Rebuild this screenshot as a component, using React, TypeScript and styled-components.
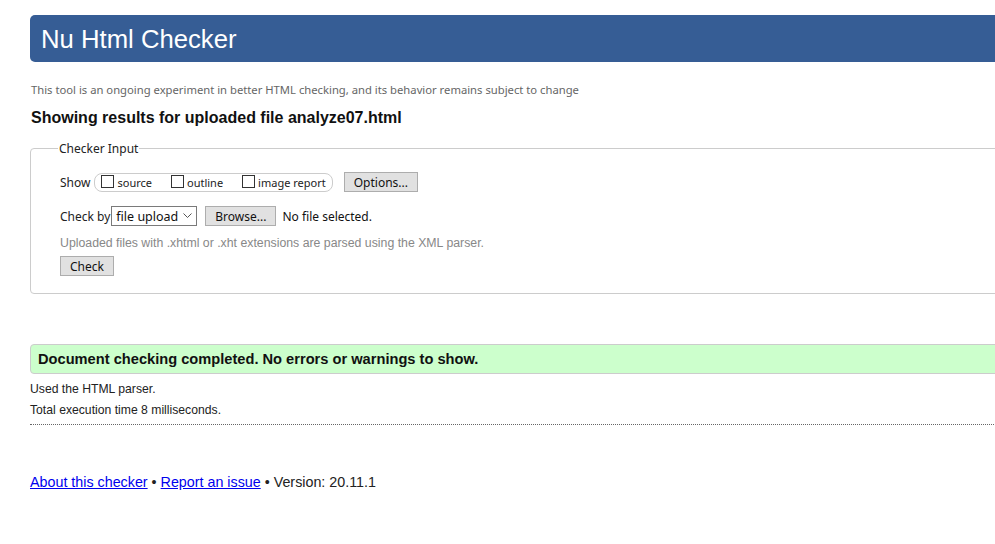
import React from "react";
import styled, { createGlobalStyle } from "styled-components";

const Global = createGlobalStyle`
  html, body { margin: 0; padding: 0; background: #fff; overflow: hidden; }
  body { font-family: "Liberation Sans", Arial, sans-serif; color: #222; }
`;

const UI = `"Noto Sans", "Open Sans", sans-serif`;

const Page = styled.div`
  width: 1040px;
  padding: 15px 0 0 30px;
  box-sizing: border-box;
`;

const Header = styled.h1`
  margin: 0;
  height: 47px;
  background: #365d95;
  border-radius: 5px;
  color: #fff;
  font-family: "Liberation Sans", Arial, sans-serif;
  font-weight: normal;
  font-size: 25.7px;
  line-height: 48px;
  padding-left: 11px;
`;

const Tagline = styled.p`
  margin: 20px 0 0 1px;
  font-family: ${UI};
  font-size: 11.25px;
  color: #666;
  line-height: 16px;
`;

const Title = styled.h2`
  margin: 10px 0 0 1px;
  font-size: 16px;
  font-weight: bold;
  line-height: 20px;
  color: #111;
`;

const Fieldset = styled.fieldset`
  margin: 12px 0 0 0;
  border: 1px solid #ccc;
  border-radius: 4px;
  padding: 15px 29px 17px 29px;
  font-family: ${UI};
  font-size: 12px;
  color: #222;
`;

const Legend = styled.legend`
  padding: 0 1px;
  margin-left: -2px;
  font-size: 12px;
  color: #222;
`;

const Row = styled.div<{ $mt?: number }>`
  display: flex;
  align-items: center;
  margin-top: ${(p) => p.$mt ?? 0}px;
  height: 20px;
`;

const Label = styled.span<{ $gap: number }>`
  font-size: 12px;
  margin-right: ${(p) => p.$gap}px;
`;

const Pill = styled.span`
  display: inline-flex;
  align-items: center;
  height: 17px;
  border: 1px solid #ccc;
  border-radius: 8px;
  padding: 0 6px 0 6px;
  margin-right: 11px;
`;

const Opt = styled.label<{ $gap?: number }>`
  display: inline-flex;
  align-items: center;
  font-size: 11px;
  margin-right: ${(p) => p.$gap ?? 0}px;
`;

const Box = styled.span`
  width: 11px;
  height: 11px;
  border: 1px solid #333;
  margin-right: 3px;
  display: inline-block;
  box-sizing: content-box;
  margin-top: -2px;
`;

const Button = styled.span`
  display: inline-flex;
  align-items: center;
  justify-content: center;
  height: 18px;
  padding: 0 9px;
  background: #e1e1e1;
  border: 1px solid #adadad;
  font-size: 12px;
  color: #111;
`;

const Select = styled.span`
  display: inline-flex;
  align-items: center;
  height: 18px;
  border: 1px solid #7a7a7a;
  padding: 0 4px 0 4px;
  font-size: 12.5px;
  margin-right: 8px;
  color: #111;
`;

const Chevron = styled.svg`
  margin-left: 5px;
`;

const Hint = styled.p`
  margin: 9px 0 0 0;
  font-family: "Liberation Sans", Arial, sans-serif;
  font-size: 12.3px;
  color: #888;
  line-height: 16px;
`;

const Note = styled.span`
  margin-left: 6px;
  font-size: 12px;
  color: #111;
`;

const Success = styled.div`
  margin-top: 50px;
  height: 28px;
  background: #ccffcc;
  border: 1px solid #ccc;
  border-radius: 4px;
  display: flex;
  align-items: center;
  padding-left: 7px;
  font-size: 14.65px;
  font-weight: bold;
  color: #111;
`;

const Info = styled.p<{ $mt?: number }>`
  margin: ${(p) => p.$mt ?? 0}px 0 0 0;
  font-size: 12.2px;
  line-height: 16px;
  color: #222;
`;

const Details = styled.div`
  margin-top: 7px;
  border-bottom: 1px dotted #666;
  padding-bottom: 6px;
`;

const Footer = styled.p`
  margin: 49px 0 0 0;
  font-size: 14.3px;
  color: #222;
  a { color: #00e; text-decoration: underline; }
`;

export default function App() {
  return (
    <>
      <Global />
      <Page>
        <Header>Nu Html Checker</Header>
        <Tagline>
          This tool is an ongoing experiment in better HTML checking, and its behavior remains subject to change
        </Tagline>
        <Title>Showing results for uploaded file analyze07.html</Title>
        <Fieldset>
          <Legend>Checker Input</Legend>
          <Row>
            <Label $gap={4}>Show</Label>
            <Pill>
              <Opt $gap={19}>
                <Box />
                source
              </Opt>
              <Opt $gap={19}>
                <Box />
                outline
              </Opt>
              <Opt>
                <Box />
                image report
              </Opt>
            </Pill>
            <Button>Options...</Button>
          </Row>
          <Row $mt={14}>
            <Label $gap={1}>Check by</Label>
            <Select>
              file upload
              <Chevron width="9" height="6" viewBox="0 0 9 6">
                <path d="M0.5 0.5 L4.5 4.5 L8.5 0.5" fill="none" stroke="#555" strokeWidth="1" />
              </Chevron>
            </Select>
            <Button>Browse...</Button>
            <Note>No file selected.</Note>
          </Row>
          <Hint>Uploaded files with .xhtml or .xht extensions are parsed using the XML parser.</Hint>
          <Row $mt={5}>
            <Button>Check</Button>
          </Row>
        </Fieldset>
        <Success>Document checking completed. No errors or warnings to show.</Success>
        <Details>
          <Info>Used the HTML parser.</Info>
          <Info $mt={5}>Total execution time 8 milliseconds.</Info>
        </Details>
        <Footer>
          <a href="#about">About this checker</a> • <a href="#issue">Report an issue</a> • Version: 20.11.1
        </Footer>
      </Page>
    </>
  );
}
